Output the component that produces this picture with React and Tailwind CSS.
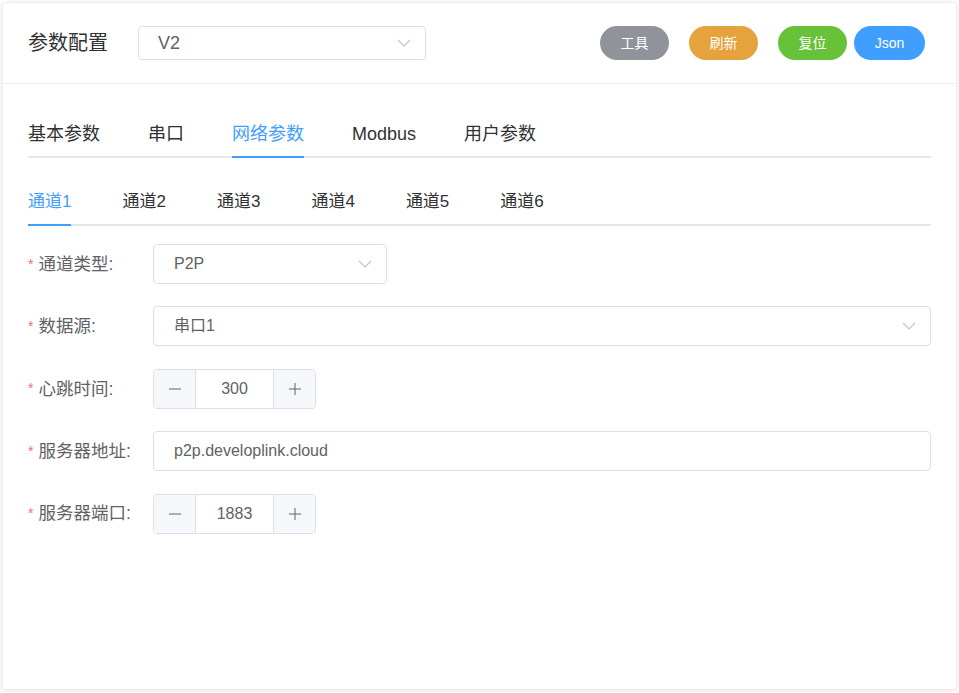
import { useState } from 'react';

const font = { fontFamily: '"Liberation Sans", "Noto Sans CJK SC", sans-serif' };

const mainTabs = ['基本参数', '串口', '网络参数', 'Modbus', '用户参数'];
const channelTabs = ['通道1', '通道2', '通道3', '通道4', '通道5', '通道6'];

const Chevron = () => (
  <svg width="14" height="8" viewBox="0 0 14 8" fill="none" className="shrink-0">
    <polyline points="1,1 7,7 13,1" stroke="#c0c4cc" strokeWidth="1.2" />
  </svg>
);

const Select = ({ value, className = '', textSize = 'text-[16px]', pl = 'pl-[20px]' }) => (
  <div
    className={`flex items-center justify-between bg-white border border-[#dcdfe6] rounded-[4px] pr-[14px] ${pl} ${className}`}
  >
    <span className={`${textSize} text-[#606266]`}>{value}</span>
    <Chevron />
  </div>
);

const NumberInput = ({ value }) => (
  <div className="flex h-[40px] w-[163px] border border-[#dcdfe6] rounded-[4px] overflow-hidden bg-white">
    <div className="w-[42px] flex items-center justify-center bg-[#f5f7fa] border-r border-[#dcdfe6]">
      <svg width="14" height="14" viewBox="0 0 14 14">
        <line x1="1" y1="7" x2="13" y2="7" stroke="#606266" strokeWidth="1" />
      </svg>
    </div>
    <div className="flex-1 flex items-center justify-center text-[16px] text-[#606266]">{value}</div>
    <div className="w-[42px] flex items-center justify-center bg-[#f5f7fa] border-l border-[#dcdfe6]">
      <svg width="14" height="14" viewBox="0 0 14 14">
        <line x1="1" y1="7" x2="13" y2="7" stroke="#606266" strokeWidth="1" />
        <line x1="7" y1="1" x2="7" y2="13" stroke="#606266" strokeWidth="1" />
      </svg>
    </div>
  </div>
);

const FormItem = ({ label, children }) => (
  <div className="flex items-center h-[40px]">
    <div className="w-[125px] shrink-0 flex items-center">
      <span className="text-[14px] text-[#f56c6c] mr-[5px]">*</span>
      <span className="text-[17.5px] text-[#606266]">{label}:</span>
    </div>
    {children}
  </div>
);

export default function App() {
  const [tab, setTab] = useState(2);
  const [channel, setChannel] = useState(0);

  return (
    <div className="bg-white p-[2px]" style={font}>
      <div className="h-[688px] bg-white border border-[#ebeef5] rounded-[4px] shadow-[0_2px_12px_0_rgba(0,0,0,0.1)] overflow-hidden">
        {/* Header */}
        <div className="flex items-center py-[23px] pl-[25px] pr-[31px] border-b border-[#ebeef5]">
          <span className="text-[20px] text-[#303133]">参数配置</span>
          <Select value="V2" className="ml-[30px] w-[288px] h-[34px]" textSize="text-[18px]" pl="pl-[19px]" />
          <div className="ml-auto flex items-center">
            <button className="w-[69px] h-[34px] rounded-full bg-[#909399] text-white text-[14px]">工具</button>
            <button className="ml-[20px] w-[69px] h-[34px] rounded-full bg-[#e6a23c] text-white text-[14px]">刷新</button>
            <button className="ml-[20px] w-[69px] h-[34px] rounded-full bg-[#67c23a] text-white text-[14px]">复位</button>
            <button className="ml-[7px] w-[71px] h-[34px] rounded-full bg-[#409eff] text-white text-[14px]">Json</button>
          </div>
        </div>

        {/* Body */}
        <div className="px-[25px]">
          {/* Main tabs */}
          <div className="mt-[38px] flex border-b-2 border-[#e4e7ed]">
            {mainTabs.map((t, i) => (
              <div
                key={t}
                onClick={() => setTab(i)}
                className={`relative pb-[10px] cursor-pointer ${i === 0 ? 'pr-[24px]' : 'px-[24px]'}`}
              >
                <span
                  className={`block text-[18px] leading-[24px] ${tab === i ? 'text-[#409eff]' : 'text-[#303133]'}`}
                >
                  {t}
                </span>
                {tab === i && (
                  <span
                    className={`absolute bottom-[-2px] h-[2px] bg-[#409eff] ${i === 0 ? 'left-0 right-[24px]' : 'left-[24px] right-[24px]'}`}
                  />
                )}
              </div>
            ))}
          </div>

          {/* Channel tabs */}
          <div className="mt-[33px] flex border-b-2 border-[#e4e7ed]">
            {channelTabs.map((t, i) => (
              <div
                key={t}
                onClick={() => setChannel(i)}
                className={`relative pb-[11px] cursor-pointer ${i === 0 ? 'pr-[25.5px]' : 'px-[25.5px]'}`}
              >
                <span
                  className={`block text-[17px] leading-[22px] ${channel === i ? 'text-[#409eff]' : 'text-[#303133]'}`}
                >
                  {t}
                </span>
                {channel === i && (
                  <span
                    className={`absolute bottom-[-2px] h-[2px] bg-[#409eff] ${i === 0 ? 'left-0 right-[25.5px]' : 'left-[25.5px] right-[25.5px]'}`}
                  />
                )}
              </div>
            ))}
          </div>

          {/* Form */}
          <div className="mt-[18px] flex flex-col gap-[22.4px]">
            <FormItem label="通道类型">
              <Select value="P2P" className="w-[234px] h-[40px]" />
            </FormItem>
            <FormItem label="数据源">
              <Select value="串口1" className="flex-1 h-[40px]" />
            </FormItem>
            <FormItem label="心跳时间">
              <NumberInput value="300" />
            </FormItem>
            <FormItem label="服务器地址">
              <div className="flex-1 h-[40px] flex items-center pl-[20px] border border-[#dcdfe6] rounded-[4px] text-[16px] text-[#606266]">
                p2p.developlink.cloud
              </div>
            </FormItem>
            <FormItem label="服务器端口">
              <NumberInput value="1883" />
            </FormItem>
          </div>
        </div>
      </div>
    </div>
  );
}
